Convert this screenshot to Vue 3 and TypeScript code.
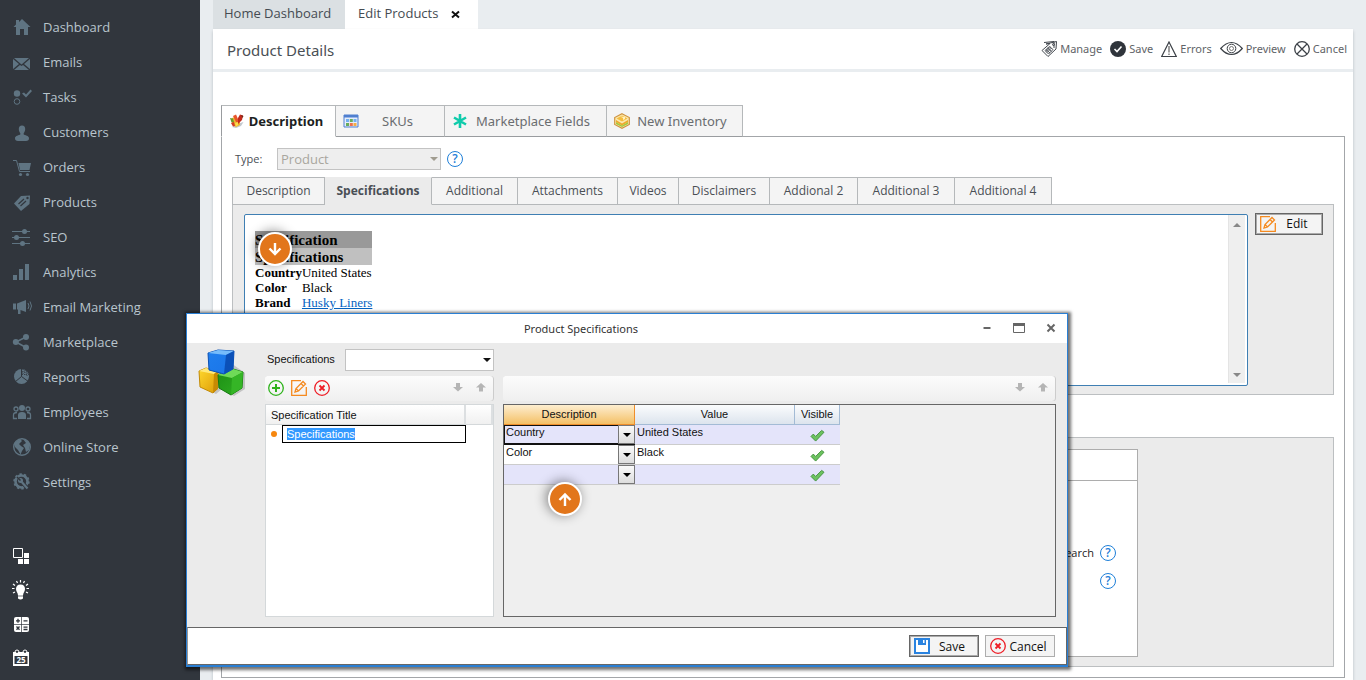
<script setup lang="ts">
import { onMounted, ref } from 'vue'

interface NavItem { label: string; icon: string }
interface SpecRow { description: string; value: string; active: boolean }

const icons: Record<string, string> = {
  home: '<path d="M10 2 18.500 10H16V18H12V12H8V18H4V10H1.500L4 7.600V3H7V5z"/>',
  mail: '<path d="M1 7 7 12 1 17zM18 7V17L12 12zM2 6H17L9.500 12.500zM2 18 8 13 9.500 14 11 13 17 18z"/>',
  tasks: '<circle cx="5" cy="6.500" r="3.200"/><circle cx="5" cy="14.500" r="2.800" fill="none" stroke="currentColor"/><path d="M10 6.500 12 5.500 14 7.500 18.500 2.500 20 4 14 10.500z"/>',
  user: '<path d="M10 3.500c2.200 0 3.300 1.500 3.200 3.700-.1 1.800-.8 3-1.500 4v1.300c1 .8 5.300 1 5.300 3.800 0 1.700-1 2.700-3 2.700H6c-2 0-3-1-3-2.700 0-2.800 4.300-3 5.300-3.800v-1.300c-.7-1-1.400-2.200-1.500-4C6.700 5 7.800 3.500 10 3.500z"/>',
  cart: '<path d="M6.500 6H19L17.500 13H8z"/><path d="M1 3.500H4.500L7.500 14.500H18" fill="none" stroke="currentColor"/><circle cx="8.500" cy="17.500" r="1.600"/><circle cx="15.500" cy="17.500" r="1.600"/>',
  tag: '<path d="M9 4 18 3.500 17.500 12 9 19 2 11.500z"/><g stroke="#31363d" stroke-width="1.200"><path d="M6.500 12 12 7M8.500 14 14 9"/></g><circle cx="15.500" cy="6" r="1.200" fill="#31363d"/>',
  seo: '<path d="M0 4.500H18M0 10.500H18M0 16.500H18" stroke="currentColor"/><circle cx="12.500" cy="4.500" r="2.500"/><circle cx="4.500" cy="10.500" r="2.500"/><circle cx="10.500" cy="16.500" r="2.500"/>',
  bars: '<path d="M1 13H5V18H1zM7 7H11V18H7zM13 2H17V18H13z"/>',
  horn: '<path d="M1 6.500H4V12.500H1zM5 6.500 14 3V15L8.500 13V17H6V12.500H5z"/><path d="M16 6q2 3 0 6M18 4.500q3 4.500 0 9" fill="none" stroke="currentColor"/>',
  share: '<path d="M4 10 14 5M4 10 14 15.500" stroke="currentColor" stroke-width="1.500"/><circle cx="3.800" cy="10" r="3"/><circle cx="14" cy="5" r="3"/><circle cx="14" cy="15.500" r="3"/>',
  pie: '<circle cx="9.500" cy="9.500" r="7.500"/><path d="M9.500 1V9.500L3 15M9.500 9.500 17 15" fill="none" stroke="#31363d"/><path d="M11 2V8M13 3V9M15 4V10M10 5H16M10 7.500H17" stroke="#31363d" stroke-width=".8" stroke-dasharray="1 1"/>',
  team: '<circle cx="10" cy="6" r="3"/><path d="M6 17V13q0-3 4-3t4 3v4z"/><g fill="none" stroke="currentColor" stroke-width="1.300"><circle cx="4" cy="7" r="2"/><circle cx="16" cy="7" r="2"/><path d="M5 16.500H1.500V13q0-2.500 3.500-2.500M15 16.500H18.500V13q0-2.500-3.500-2.500"/></g>',
  globe: '<circle cx="10" cy="10" r="8.300" fill="none" stroke="currentColor" stroke-width="1.400"/><path d="M2.500 5.500 8 2 10 4 7 7 9 9 12 11 10 14 8.500 17.500 6 13 3 10zM11 2 16 4 18 8 17 13 14 15 13 11 11 8 14 6z"/>',
  gear: '<circle cx="9.500" cy="9.500" r="6" fill="none" stroke="currentColor" stroke-width="2.600"/><circle cx="9.500" cy="9.500" r="7.300" fill="none" stroke="currentColor" stroke-width="1.800" stroke-dasharray="2.300 2.290"/><path d="M8 8 16 17" stroke="#31363d" stroke-width="4"/><path d="M8 8 15.500 16.500" stroke="currentColor" stroke-width="2.200"/><circle cx="8.500" cy="8.500" r="2.500"/><path d="M5 5 8.500 8.500" stroke="#31363d" stroke-width="1.500"/>',
  layers: '<path d="M1.500 2.500H10.500V11.500H1.500z" fill="none" stroke="currentColor"/><path d="M12 7H17V12H12zM6 13H11V18H6zM12 13H17V18H12z"/>',
  bulb: '<path d="M8.500 4.500c3 0 4.500 2 4.500 4.500 0 3-2 3.500-2 6.500v3q-2.500 2-5 0v-3c0-3-2-3.500-2-6.500 0-2.500 1.500-4.500 4.500-4.500z"/><path d="M6 16H11" stroke="#31363d" stroke-width=".7"/><path d="M8.500 0V2.500M4.500 1 5.500 3M12.500 1 11.500 3M1 4 3 5.500M16 4 14 5.500M0 8.500H2.500M14.500 8.500H17M1 13 3 12M16 13 14 12" stroke="currentColor" stroke-width="1.200"/>',
  calc: '<rect x="2" y="3" width="15" height="15" rx="2"/><path d="M9.500 3V18M2 10.500H17" stroke="#31363d" stroke-width=".7"/><path d="M4 6.800H8M6 4.800V8.800M11.500 6.800H15.500M4.500 12.500 7.500 15.800M7.500 12.500 4.500 15.800M11.500 13.200H15.500M11.500 15.500H15.500" stroke="#31363d" stroke-width="1.300"/>',
  calendar: '<path d="M1 4H17V18H1z"/><path d="M3 4q0-2 2-2t2 2M11 4q0-2 2-2t2 2" fill="none" stroke="currentColor"/><path d="M4 4h2M12 4h2" stroke="#31363d" stroke-width="1.500"/><path d="M2.500 8H15.500V16H2.500z" fill="#31363d"/><text x="9" y="15" text-anchor="middle" font-size="8" font-weight="700" font-family="Open Sans, sans-serif">25</text>',
}

const nav: NavItem[] = [
  { label: 'Dashboard', icon: 'home' },
  { label: 'Emails', icon: 'mail' },
  { label: 'Tasks', icon: 'tasks' },
  { label: 'Customers', icon: 'user' },
  { label: 'Orders', icon: 'cart' },
  { label: 'Products', icon: 'tag' },
  { label: 'SEO', icon: 'seo' },
  { label: 'Analytics', icon: 'bars' },
  { label: 'Email Marketing', icon: 'horn' },
  { label: 'Marketplace', icon: 'share' },
  { label: 'Reports', icon: 'pie' },
  { label: 'Employees', icon: 'team' },
  { label: 'Online Store', icon: 'globe' },
  { label: 'Settings', icon: 'gear' },
]

const tools: NavItem[] = [
  { label: 'Layouts', icon: 'layers' },
  { label: 'Tips', icon: 'bulb' },
  { label: 'Calculator', icon: 'calc' },
  { label: 'Calendar', icon: 'calendar' },
]

const tabs = ['Description', 'Specifications', 'Additional', 'Attachments', 'Videos', 'Disclaimers', 'Addional 2', 'Additional 3', 'Additional 4']
const activeTab = ref('Specifications')

const rows = ref<SpecRow[]>([
  { description: 'Country', value: 'United States', active: true },
  { description: 'Color', value: 'Black', active: false },
  { description: '', value: '', active: false },
])

const title = ref('Specifications')
const titleInput = ref<HTMLInputElement | null>(null)

onMounted(() => {
  titleInput.value?.focus()
  titleInput.value?.select()
})
</script>

<template>
  <div class="app">
    <aside class="sidebar">
      <nav class="nav">
        <a v-for="item in nav" :key="item.label" href="#" class="nav-link">
          <svg class="nav-icon" viewBox="0 0 20 20" fill="currentColor" v-html="icons[item.icon]" />
          {{ item.label }}
        </a>
      </nav>
      <div class="tools">
        <button v-for="tool in tools" :key="tool.label" class="tool" :aria-label="tool.label">
          <svg class="nav-icon" viewBox="0 0 20 20" fill="currentColor" v-html="icons[tool.icon]" />
        </button>
      </div>
    </aside>

    <main class="main">
      <div class="page-tabs">
        <button class="page-tab">Home Dashboard</button>
        <button class="page-tab current">
          Edit Products
          <svg class="x" viewBox="0 0 9 9"><path d="M1 1.500 8 7.500M8 1.500 1 7.500" stroke="#111" stroke-width="2" /></svg>
        </button>
      </div>

      <div class="sheet">
        <header class="head">
          <h1>Product Details</h1>
          <div class="actions">
            <button class="action">
              <svg class="i16" viewBox="0 0 16 16" fill="none" stroke="#41464d"><path d="M5 3 15.500.500 15 8 7 15.500 1 9.500 9 2.500zM3 1.500 13 .500 13 7" /><path d="M4 9.500 7.500 13 12 8.500 8.500 5.500zM5 8.500 9 12M6.500 7 10.500 10.500M6 11.500 10.500 7M4.800 10.500 9.500 6" stroke-width=".9" /><circle cx="12.500" cy="3.500" r="1" /></svg>
              Manage
            </button>
            <button class="action">
              <svg class="i16" viewBox="0 0 16 16"><circle cx="8" cy="8" r="8" fill="#2f343b" /><path d="M4.500 8 7 10.500 11.500 5.500" fill="none" stroke="#fff" stroke-width="1.600" /></svg>
              Save
            </button>
            <button class="action">
              <svg class="i16" viewBox="0 0 16 16" fill="none" stroke="#3c4147"><path d="M8 1 15.300 15.500H.7z" stroke-width="1.200" /><path d="M8 5V11.500M8 12.500V14" stroke-width="1.400" stroke="#777" /></svg>
              Errors
            </button>
            <button class="action">
              <svg class="i23" viewBox="0 0 23 16" fill="none" stroke="#3c4147"><path d="M.7 7.500Q6 1.500 11.500 1.500T22.300 7.500Q17 13.500 11.500 13.500T.7 7.500z" stroke-width="1.200" /><circle cx="11.500" cy="7.500" r="4.300" /><circle cx="11.500" cy="7.500" r="2" stroke="#777" /></svg>
              Preview
            </button>
            <button class="action">
              <svg class="i16" viewBox="0 0 16 16" fill="none" stroke="#3c4147" stroke-width="1.300"><circle cx="8" cy="8" r="7.300" /><path d="M3 3 13 13M13 3 3 13" /></svg>
              Cancel
            </button>
          </div>
        </header>

        <div class="body">
          <div class="main-tabs" role="tablist">
            <button class="main-tab on" role="tab" aria-selected="true">
              <svg class="i16" viewBox="0 0 16 16"><path d="M8 11 14.500 9 12 13 7 15 3 14z" fill="#c3c8ce" /><path d="M3 5 6 4 11 8 11 12 7 14 3 11z" fill="#f0b52c" /><path d="M4 3 7 1.500 9 6 9 10 7 9z" fill="#e8542a" /><path d="M9 5 11 1.500 14 2.500 13 7 9 11z" fill="#c22a1c" /><path d="M12 2 14.500 3 13.500 5z" fill="#6b2a1a" /><path d="M1 5 4 5.500 5 9 2.500 9.500z" fill="#6a9a2c" /><path d="M2 10 5 9 6 13 4 13.500z" fill="#d23b22" /><path d="M6 10 9 9 9 12 7 13.500z" fill="#f8dc4c" /></svg>
              <span>Description</span>
            </button>
            <button class="main-tab" role="tab" aria-selected="false">
              <svg class="i16" viewBox="0 0 16 16"><path d="M1 2H15V14H1z" fill="#e6eefb" stroke="#4f7fd0" /><path d="M1 2H15V4.500H1z" fill="#4f7fd0" /><path d="M3 6H6V9H3zM10.500 6H13.500V9H10.500z" fill="#74b0f2" /><path d="M6.800 6H9.800V9H6.800zM3 10H6V13H3z" fill="#68ad5c" /><path d="M6.800 10H9.800V13H6.800z" fill="#ef704a" /><path d="M10.500 10H13.500V13H10.500z" fill="#f3ad45" /></svg>
              <span>SKUs</span>
            </button>
            <button class="main-tab" role="tab" aria-selected="false">
              <svg class="i16" viewBox="0 0 16 16"><path d="M8 1V15M2 4.500 14 11.500M14 4.500 2 11.500" stroke="#0fcbab" stroke-width="2.600" /></svg>
              <span>Marketplace Fields</span>
            </button>
            <button class="main-tab" role="tab" aria-selected="false">
              <svg class="i16" viewBox="0 0 16 16"><path d="M8 .7 15.300 4.500V11.500L8 15.300.7 11.500V4.500z" fill="#fbe9b0" stroke="#cf9440" stroke-width="1.200" /><path d="M8 2.500 13.500 5.500 8 8.500 2.500 5.500z" fill="#f5bd3f" /><path d="M6 3.500 9 5V7L11 6V4z" fill="#fff0c0" /><path d="M2 7 8 10.500 14 7V9L8 12.500 2 9z" fill="#efa92c" /><path d="M2 9 8 12.500 14 9V11L8 14 2 11z" fill="#a5c83e" /></svg>
              <span>New Inventory</span>
            </button>
          </div>

          <section class="panel">
            <div class="type-row">
              <label for="type">Type:</label>
              <span class="picker type-picker">
                <select id="type" disabled><option>Product</option></select>
              </span>
              <button class="help" aria-label="Help">?</button>
            </div>

            <div class="sub-tabs" role="tablist">
              <button
                v-for="tab in tabs"
                :key="tab"
                class="sub-tab"
                :class="{ on: tab === activeTab }"
                role="tab"
                :aria-selected="tab === activeTab"
                @click="activeTab = tab"
              >{{ tab }}</button>
            </div>

            <div class="box preview-box">
              <div class="viewer">
                <div class="doc">
                  <table class="specs">
                    <thead>
                      <tr class="dark"><th colspan="2">Specification</th></tr>
                      <tr class="light"><th colspan="2">Specifications</th></tr>
                    </thead>
                    <tbody>
                      <tr><th>Country</th><td>United States</td></tr>
                      <tr><th>Color</th><td>Black</td></tr>
                      <tr><th>Brand</th><td><a href="#">Husky Liners</a></td></tr>
                    </tbody>
                  </table>
                  <span class="marker in-doc">
                    <svg viewBox="0 0 16 16" fill="none" stroke="#fff" stroke-width="2.400"><path d="M8 2V13M2.500 7.500 8 13 13.500 7.500" /></svg>
                  </span>
                </div>
                <div class="scroll"><i class="up" /><i class="down" /></div>
              </div>
              <button class="btn strong edit">
                <svg class="i16" viewBox="0 0 16 16" fill="none" stroke="#f58a1f" stroke-width="1.300"><path d="M10 .700H.700V15.300H15.300V7" /><path d="M4 12 5 8.500 12 1.500 14.500 4 7.500 11zM10 3.500 12.500 6M5 8.500 7.500 11" /></svg>
                <span>Edit</span>
              </button>
            </div>

            <div class="box lower-box">
              <div class="card">
                <div class="card-head" />
                <div class="card-line">Search <button class="help" aria-label="Search help">?</button></div>
                <div class="card-line"><button class="help" aria-label="More help">?</button></div>
              </div>
            </div>
          </section>
        </div>
      </div>
    </main>

    <div class="dialog" role="dialog" aria-label="Product Specifications">
      <div class="title-bar">
        <h2>Product Specifications</h2>
        <div class="win-buttons">
          <button aria-label="Minimize"><svg viewBox="0 0 12 12"><path d="M2.500 6H9.500" stroke="#666" stroke-width="2" /></svg></button>
          <button aria-label="Maximize"><svg viewBox="0 0 12 12"><path d="M.5 1.500H11.500V10.500H.5z" fill="none" stroke="#666" /><path d="M0 1H12V4H0z" fill="#666" /></svg></button>
          <button aria-label="Close"><svg viewBox="0 0 12 12"><path d="M2.500 2.500 9.500 9.500M9.500 2.500 2.500 9.500" stroke="#666" stroke-width="2" /></svg></button>
        </div>
      </div>

      <div class="dialog-body">
        <svg class="cubes" viewBox="0 0 48 48">
          <defs>
            <linearGradient id="cubeBlue" x2="1" y2="1"><stop stop-color="#1f7fee" /><stop offset="1" stop-color="#1a74e8" /></linearGradient>
            <linearGradient id="cubeGold" x2="1" y2="1"><stop stop-color="#ffd92e" /><stop offset="1" stop-color="#dc9a06" /></linearGradient>
            <linearGradient id="cubeGreen" x2="1" y2="1"><stop stop-color="#1d8e14" /><stop offset="1" stop-color="#2fae22" /></linearGradient>
          </defs>
          <path d="M4 38 18 45 24 40 36 47 47 40V24L30 12z" fill="#888" opacity=".4" />
          <path d="M1 22 8 19 20 22V39L15 44 2 38z" fill="url(#cubeGold)" stroke="#c28a08" stroke-linejoin="round" />
          <path d="M1 22 8 19 20 22 16 25z" fill="#ffe97a" /><path d="M16 25 20 22V40L15 44z" fill="#c78a04" />
          <path d="M20 26 32 19 45 23 44 39 33 46 21 39z" fill="url(#cubeGreen)" stroke="#147a0e" stroke-linejoin="round" />
          <path d="M20 26 32 19 45 23 34 29z" fill="#6fda58" /><path d="M34 29 45 23 44 39 33 46z" fill="#35b526" />
          <path d="M10 4 20 1 36 2 35 20 26 25 11 21z" fill="url(#cubeBlue)" stroke="#0b50b4" stroke-linejoin="round" />
          <path d="M10 4 20 1 36 2 28 6z" fill="#76bcfb" /><path d="M28 6 36 2 35 20 26 25z" fill="#0b50b8" />
        </svg>

        <div class="left">
          <div class="spec-row">
            <label for="spec">Specifications</label>
            <span class="picker spec-picker"><select id="spec"><option></option></select></span>
          </div>
          <div class="toolbar">
            <button class="tb" aria-label="Add"><svg viewBox="0 0 16 16" fill="none" stroke="#2fb31c"><circle cx="8" cy="8" r="7.300" stroke-width="1.300" /><path d="M8 4V12M4 8H12" stroke-width="2" /></svg></button>
            <button class="tb" aria-label="Edit"><svg viewBox="0 0 16 16" fill="none" stroke="#f58a1f" stroke-width="1.300"><path d="M10 .700H.700V15.300H15.300V7" /><path d="M4 12 5 8.500 12 1.500 14.500 4 7.500 11zM10 3.500 12.500 6M5 8.500 7.500 11" /></svg></button>
            <button class="tb" aria-label="Delete"><svg viewBox="0 0 16 16" fill="none" stroke="#ee1c25"><circle cx="8" cy="8" r="7.300" stroke-width="1.300" /><path d="M5.500 5.500 10.500 10.500M10.500 5.500 5.500 10.500" stroke-width="1.800" /></svg></button>
            <span class="grow" />
            <button class="mv" aria-label="Move down"><svg viewBox="0 0 10 9"><path d="M3 0H7V4H10L5 8.500 0 4H3z" fill="#b5b5b5" /></svg></button>
            <button class="mv" aria-label="Move up"><svg viewBox="0 0 10 9"><path d="M3 8.500H7V4.500H10L5 0 0 4.500H3z" fill="#b5b5b5" /></svg></button>
          </div>
          <div class="list">
            <div class="list-head"><span>Specification Title</span><span /></div>
            <div class="list-row">
              <i class="dot" />
              <input ref="titleInput" v-model="title" type="text" aria-label="Specification Title" />
            </div>
          </div>
        </div>

        <div class="right">
          <div class="toolbar">
            <span class="grow" />
            <button class="mv" aria-label="Move value down"><svg viewBox="0 0 10 9"><path d="M3 0H7V4H10L5 8.500 0 4H3z" fill="#b5b5b5" /></svg></button>
            <button class="mv" aria-label="Move value up"><svg viewBox="0 0 10 9"><path d="M3 8.500H7V4.500H10L5 0 0 4.500H3z" fill="#b5b5b5" /></svg></button>
          </div>
          <div class="grid-area">
            <table class="grid">
              <thead>
                <tr><th class="c1">Description</th><th class="c2">Value</th><th class="c3">Visible</th></tr>
              </thead>
              <tbody>
                <tr v-for="(row, i) in rows" :key="i">
                  <td>
                    <div class="combo" :class="{ active: row.active }">
                      <input v-model="row.description" type="text" aria-label="Description" />
                      <button aria-label="Choose description"><i class="caret" /></button>
                    </div>
                  </td>
                  <td class="val">{{ row.value }}</td>
                  <td>
                    <label class="check">
                      <input type="checkbox" checked aria-label="Visible" />
                      <svg viewBox="0 0 16 14"><path d="M1 8 3.500 5.500 6 8 12.500 1.500 15 3.500 6 13z" fill="#6cc25f" stroke="#3f8f3a" /></svg>
                    </label>
                  </td>
                </tr>
              </tbody>
            </table>
            <span class="marker in-grid">
              <svg viewBox="0 0 16 16" fill="none" stroke="#fff" stroke-width="2.400"><path d="M8 15V4M2.500 9 8 3.500 13.500 9" /></svg>
            </span>
          </div>
        </div>
      </div>

      <footer class="foot">
        <button class="btn strong">
          <svg class="i16" viewBox="0 0 16 16"><path d="M1 1H15V15H1z" fill="#fff" stroke="#2a83e0" stroke-width="2" /><path d="M4 1H12V7H4z" fill="#2a83e0" /><path d="M9 2H10.500V5H9z" fill="#fff" /></svg>
          <span>Save</span>
        </button>
        <button class="btn">
          <svg class="i16" viewBox="0 0 16 16" fill="none" stroke="#ee1c25"><circle cx="8" cy="8" r="7.300" stroke-width="1.300" /><path d="M5.500 5.500 10.500 10.500M10.500 5.500 5.500 10.500" stroke-width="1.800" /></svg>
          <span>Cancel</span>
        </button>
      </footer>
    </div>
  </div>
</template>

<style>
body {
  background: #e9edf0;
}
</style>

<style scoped>
* {
  box-sizing: border-box;
}
.app {
  position: relative;
  display: flex;
  min-height: 100vh;
  background: #e9edf0;
  font: 13px/20px "Open Sans", "Noto Sans", sans-serif;
  color: #4a4f55;
}
button {
  font: inherit;
  color: inherit;
  margin: 0;
  padding: 0;
  border: 0;
  background: none;
}
svg {
  display: block;
  flex: none;
}
.i16 {
  width: 16px;
  height: 16px;
}
.i23 {
  width: 23px;
  height: 16px;
}

.sidebar {
  flex: none;
  width: 200px;
  padding-top: 9px;
  background: #31363d;
}
.nav-link {
  display: flex;
  align-items: center;
  gap: 11px;
  height: 35px;
  padding-left: 12px;
  color: #b9c5cd;
  text-decoration: none;
}
.nav-icon {
  width: 20px;
  height: 20px;
  color: #5f7482;
}
.tools {
  padding-top: 40px;
}
.tool {
  display: flex;
  align-items: center;
  width: 44px;
  height: 34px;
  padding-left: 12px;
}
.tool .nav-icon {
  color: #fff;
}

.main {
  flex: 1;
  display: flex;
  flex-direction: column;
  min-width: 0;
  padding: 0 13px;
}
.page-tabs {
  display: flex;
  height: 29px;
}
.page-tab {
  display: flex;
  align-items: center;
  gap: 13px;
  width: 132px;
  padding: 0 0 3px 11px;
  background: #dbe0e3;
  color: #454b52;
}
.page-tab.current {
  width: 133px;
  padding-left: 13px;
  background: #fff;
}
.x {
  width: 9px;
  height: 9px;
  margin-top: 2px;
}
.sheet {
  flex: 1;
  background: #fff;
  box-shadow: 0 2px 3px #b9bec3;
}
.head {
  display: flex;
  align-items: center;
  justify-content: space-between;
  height: 43px;
  padding: 0 6px 0 14px;
  border-bottom: 3px solid #e9edf0;
}
.head h1 {
  margin: 0;
  padding-top: 2px;
  font: 400 15px/20px "Noto Sans", "Open Sans", sans-serif;
}
.actions {
  display: flex;
  gap: 8px;
  font-family: "Noto Sans", "Open Sans", sans-serif;
  font-size: 11px;
}
.action {
  display: flex;
  align-items: center;
  gap: 3px;
  color: #5f6468;
}

.body {
  padding: 33px 8px 2px;
}
.main-tabs {
  position: relative;
  display: grid;
  grid-template-columns: 115px 109px 162px 136px;
  height: 32px;
  margin-bottom: -1px;
  font-family: "Noto Sans", "Open Sans", sans-serif;
}
.main-tab {
  display: flex;
  align-items: center;
  padding: 0 8px 0 7px;
  border: 1px solid #b5b8ba;
  border-left: 0;
  border-bottom-color: #999c9f;
  background: #f4f4f4;
  color: #6a6d70;
}
.main-tab span {
  flex: 1;
  text-align: center;
}
.main-tab.on {
  border-left: 1px solid #999c9f;
  border-bottom-color: #fff;
  background: #fff;
  color: #1d1f22;
  font-weight: 700;
}
.panel {
  padding: 11px 10px 10px;
  border: 1px solid #a3a6a9;
}
.type-row {
  display: flex;
  align-items: center;
  height: 22px;
  padding-left: 3px;
  font-size: 11px;
}
.type-row label {
  width: 42px;
}
.picker {
  position: relative;
  display: block;
}
.picker::after {
  content: "";
  position: absolute;
  right: 3px;
  top: 50%;
  margin-top: -2px;
  border: 4px solid transparent;
  border-top-color: #111;
  border-bottom: 0;
  pointer-events: none;
}
.picker select {
  display: block;
  width: 100%;
  height: 22px;
  padding: 0 3px;
  appearance: none;
  border: 1px solid #c3c3c3;
  border-radius: 0;
  background: #fff;
  font: inherit;
}
.type-picker {
  width: 164px;
  font-size: 13px;
}
.type-picker select {
  background: #eee;
  color: #a9a69e;
  opacity: 1;
}
.type-picker::after {
  border-top-color: #a09c90;
}
.help {
  width: 16px;
  height: 16px;
  margin-left: 6px;
  border: 1px solid #1f7fd8;
  border-radius: 50%;
  color: #1f7fd8;
  font-size: 12px;
  font-weight: 600;
  line-height: 14px;
  text-align: center;
}
.sub-tabs {
  position: relative;
  display: grid;
  grid-template-columns: 93px 107px 86px 100px 61px 91px 88px 97px 97px;
  height: 28px;
  margin-top: 7px;
  margin-bottom: -1px;
}
.sub-tab {
  border: 1px solid #b5b8ba;
  border-left: 0;
  background: #f4f4f4;
  font-size: 12px;
}
.sub-tab:first-child {
  border-left: 1px solid #b5b8ba;
}
.sub-tab.on {
  border-top-color: #ebebeb;
  border-bottom-color: #ebebeb;
  background: #ebebeb;
  font-weight: 700;
}
.box {
  border: 1px solid #bcbfc1;
  background: #ebebeb;
}
.preview-box {
  display: flex;
  align-items: flex-start;
  gap: 7px;
  padding: 9px 10px 8px 11px;
}
.viewer {
  display: flex;
  flex: 1;
  height: 172px;
  padding-right: 2px;
  border: 1px solid #3f7fb3;
  border-radius: 2px;
  background: #fff;
}
.doc {
  position: relative;
  flex: 1;
  padding: 16px 10px;
  font-family: "Liberation Serif", serif;
  color: #000;
}
.specs {
  border-collapse: collapse;
  font-size: 13px;
  line-height: 15px;
}
.specs th,
.specs td {
  padding: 0;
  text-align: left;
}
.specs thead th {
  padding-top: 1px;
  font-size: 15px;
  line-height: 16px;
}
.dark {
  background: #999;
}
.light {
  background: #c0c0c0;
}
.specs a {
  color: #0563c1;
}
.scroll {
  display: flex;
  flex-direction: column;
  justify-content: space-between;
  align-items: center;
  width: 17px;
  margin-bottom: 2px;
  padding: 8px 0 6px;
  border-left: 1px solid #e4e4e4;
  background: #efefef;
}
.up,
.down {
  border: 4px solid transparent;
}
.up {
  border-top: 0;
  border-bottom-color: #888;
}
.down {
  border-bottom: 0;
  border-top-color: #888;
}
.marker {
  position: absolute;
  display: flex;
  align-items: center;
  justify-content: center;
  width: 34px;
  height: 34px;
  border: 2px solid #fff;
  border-radius: 50%;
  background: #e2761b;
  box-shadow: -2px -1px 12px rgba(0, 0, 0, 0.45);
}
.marker svg {
  width: 16px;
  height: 16px;
}
.in-doc {
  left: 13px;
  top: 17px;
}
.in-grid {
  left: 44px;
  top: 77px;
}
.btn {
  display: flex;
  align-items: center;
  width: 70px;
  height: 22px;
  padding: 0 4px;
  border: 1px solid #adadad;
  background: #f4f4f4;
  color: #111;
  font-size: 12px;
}
.btn span {
  flex: 1;
  text-align: center;
}
.btn.strong {
  border-color: #666;
  box-shadow: inset 0 0 0 1px #aaa;
}
.edit {
  width: 68px;
  margin-top: -1px;
}
.lower-box {
  height: 230px;
  margin-top: 42px;
  padding: 11px 195px 10px 11px;
}
.card {
  height: 208px;
  border: 1px solid #adadad;
  background: #fff;
  font-size: 11px;
}
.card-head {
  height: 31px;
  margin-bottom: 58px;
  border-bottom: 1px solid #adadad;
}
.card-line {
  display: flex;
  align-items: center;
  justify-content: flex-end;
  height: 28px;
  padding-right: 21px;
  color: #222;
}

.dialog {
  position: absolute;
  left: 186px;
  top: 313px;
  width: 882px;
  border: 1px solid #2a7fd4;
  border-bottom-width: 2px;
  background: #ebebeb;
  box-shadow: 1px 1px 3px 2px rgba(0, 0, 0, 0.55);
  color: #111;
  font: 11px/15px "Liberation Sans", Arial, sans-serif;
}
.title-bar {
  display: flex;
  align-items: center;
  height: 29px;
  background: #fff;
}
.title-bar h2 {
  flex: 1;
  margin: 0;
  padding-right: 6px;
  text-align: center;
  color: #333;
  font: 400 11px/15px "Noto Sans", "Open Sans", sans-serif;
}
.win-buttons {
  display: flex;
  gap: 20px;
  padding: 0 10px 2px 0;
}
.win-buttons svg {
  width: 12px;
  height: 12px;
}
.dialog-body {
  display: flex;
  height: 284px;
  padding: 6px 11px 10px 11px;
}
.cubes {
  width: 48px;
  height: 48px;
}
.left {
  display: flex;
  flex-direction: column;
  width: 229px;
  margin-left: 19px;
}
.spec-row {
  display: flex;
  align-items: center;
  justify-content: space-between;
  height: 22px;
  margin-bottom: 5px;
  padding-left: 2px;
}
.spec-row label {
  padding-bottom: 2px;
}
.spec-picker {
  width: 149px;
}
.toolbar {
  display: flex;
  align-items: center;
  gap: 7px;
  height: 25px;
  margin-bottom: 3px;
  padding: 0 8px 2px 3px;
  border-radius: 3px;
  background: linear-gradient(#fcfcfc, #efefef);
  box-shadow: inset -1px 0 0 #ccc;
}
.tb svg {
  width: 16px;
  height: 16px;
}
.grow {
  flex: 1;
}
.mv svg {
  width: 10px;
  height: 9px;
}
.mv + .mv {
  margin-left: 6px;
}
.list {
  flex: 1;
  border: 1px solid #d4d8da;
  background: #fff;
}
.list-head {
  display: grid;
  grid-template-columns: 1fr 27px;
  height: 20px;
  border-bottom: 1px solid #d4d8da;
  background: linear-gradient(#fff, #f0f0f0);
  line-height: 20px;
}
.list-head span {
  padding-left: 5px;
  border-right: 2px solid #dcdfe1;
}
.list-row {
  display: flex;
  align-items: center;
}
.dot {
  width: 6px;
  height: 6px;
  margin: 0 5px;
  border-radius: 50%;
  background: #f6870f;
}
.list-row input {
  width: 184px;
  height: 18px;
  padding: 0 4px;
  border: 1px solid #000;
  border-radius: 0;
  outline: 0;
  background: #fff;
  font: inherit;
}
.list-row input::selection {
  background: #3399ff;
  color: #fff;
}
.right {
  display: flex;
  flex: 1;
  flex-direction: column;
  margin-left: 9px;
  padding-top: 27px;
}
.grid-area {
  position: relative;
  flex: 1;
  border: 1px solid #666;
  background: #efefef;
}
.grid {
  border-spacing: 0;
  table-layout: fixed;
  width: 336px;
}
.grid th {
  height: 20px;
  padding: 0;
  border-right: 1px solid #a3bbd5;
  border-bottom: 1px solid #a3bbd5;
  background: linear-gradient(#fbfcfd, #dce4ed);
  font-weight: 400;
}
.grid .c1 {
  width: 131px;
  border-color: #ef8e2b;
  background: linear-gradient(#fdeed0, #f4c066);
}
.grid .c3 {
  width: 45px;
}
.grid td {
  height: 20px;
  padding: 0;
  border-bottom: 1px solid #ccc;
  background: #e4e4fa;
  vertical-align: top;
}
.grid tr:nth-child(even) td {
  background: #fff;
}
.grid .val {
  padding-left: 2px;
}
.combo {
  display: flex;
  height: 19px;
}
.combo input {
  flex: 1;
  min-width: 0;
  height: 15px;
  padding: 0 2px;
  border: 0;
  background: none;
  font: inherit;
  color: inherit;
}
.combo button {
  display: flex;
  align-items: center;
  justify-content: center;
  width: 17px;
  border: 1px solid #777;
  background: linear-gradient(#fafafa, #ddd);
}
.combo.active {
  box-shadow: inset 0 0 0 1px #111, 0 1px 0 #111;
}
.caret {
  border: 4px solid transparent;
  border-top-color: #000;
  border-bottom: 0;
}
.check {
  position: relative;
  display: flex;
  justify-content: center;
  padding-top: 4px;
}
.check input {
  position: absolute;
  inset: 0;
  margin: 0;
  opacity: 0;
}
.check svg {
  width: 15px;
  height: 13px;
}
.foot {
  display: flex;
  align-items: center;
  justify-content: flex-end;
  gap: 6px;
  height: 38px;
  padding-right: 11px;
  border: 1px solid #666;
  border-left-color: #999;
  background: #fff;
  font-family: "Open Sans", "Noto Sans", sans-serif;
}
</style>
